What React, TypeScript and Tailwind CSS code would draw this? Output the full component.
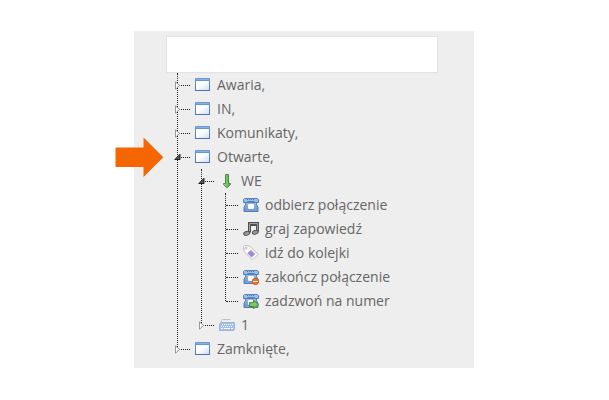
import React, { FC, ReactNode, useState } from "react";

const WindowIcon: FC = () => (
  <svg viewBox="0 0 16 16" className="block size-4" aria-hidden="true">
    <defs>
      <linearGradient id="win-frame" x1="0" y1="0" x2="0" y2="1">
        <stop offset="0" stopColor="#6f9cd8" />
        <stop offset="1" stopColor="#4f70ab" />
      </linearGradient>
      <linearGradient id="win-body" x1="0" y1="0" x2="1" y2="1">
        <stop offset="0.4" stopColor="#ffffff" />
        <stop offset="1" stopColor="#cfdff6" />
      </linearGradient>
    </defs>
    <rect x="0" y="1" width="15" height="13" rx="0.5" fill="url(#win-frame)" />
    <rect x="1" y="2" width="13" height="1" fill="#86afe4" />
    <rect x="1" y="4" width="13" height="9" fill="url(#win-body)" />
  </svg>
);

const DownIcon: FC = () => (
  <svg viewBox="0 0 16 16" className="block size-4" aria-hidden="true">
    <defs>
      <linearGradient id="down-fill" x1="0" y1="0" x2="1" y2="0">
        <stop offset="0" stopColor="#a5dc8d" />
        <stop offset="1" stopColor="#45a53f" />
      </linearGradient>
    </defs>
    <path d="M6.5 1.5h3v9h2v1L8.3 14.7h-.6L4.5 11.5v-1h2z" fill="url(#down-fill)" stroke="#43933d" />
  </svg>
);

const PhoneShape: FC = () => (
  <>
    <defs>
      <linearGradient id="phone-body" x1="0" y1="0" x2="0" y2="1">
        <stop offset="0" stopColor="#a3c3e8" />
        <stop offset="1" stopColor="#6690c8" />
      </linearGradient>
    </defs>
    <path d="M2.5 4.5h11v3l1.5 3v4H1v-4l1.5-3z" fill="url(#phone-body)" stroke="#4f7cb5" />
    <path d="M1.5 1.5h13l1 1v3h-3.6l-.6-1H4.7l-.6 1H.5v-3z" fill="#9dbfe6" stroke="#5581b8" />
    <path d="M4 2.5h8" stroke="#4d79ae" strokeDasharray="1 1" />
    <path d="M4 5.5h8" stroke="#5581b8" />
    <rect x="5" y="7" width="6" height="5" rx="1" fill="#fbfdff" />
    <path d="M2 13.5h12" stroke="#7ba3d6" />
  </>
);

const PhoneIcon: FC = () => (
  <svg viewBox="0 0 16 16" className="block size-4" aria-hidden="true">
    <PhoneShape />
  </svg>
);

const PhoneEndIcon: FC = () => (
  <svg viewBox="0 0 16 16" className="block size-4" aria-hidden="true">
    <PhoneShape />
    <circle cx="12.4" cy="12.4" r="3.1" fill="#f0742c" stroke="#d9520f" />
    <rect x="10" y="12" width="5" height="1" fill="#fff" />
  </svg>
);

const PhoneForwardIcon: FC = () => (
  <svg viewBox="0 0 16 16" className="block size-4" aria-hidden="true">
    <PhoneShape />
    <path d="M6.5 9.5h4V7.2l5 4.3-5 4.2v-2.2h-4z" fill="#87c65d" stroke="#3c8a2e" />
  </svg>
);

const MusicIcon: FC = () => (
  <svg viewBox="0 0 16 16" className="block size-4" aria-hidden="true">
    <path d="M5 1h11v9.5h-3V5H8v6.5H5z" fill="#505050" />
    <path d="M6.5 10.5v-8h8v7" fill="none" stroke="#a2a2a2" />
    <ellipse cx="3.7" cy="12.3" rx="3.1" ry="1.9" fill="#999" stroke="#505050" transform="rotate(-15 3.7 12.3)" />
    <ellipse cx="12.3" cy="11.3" rx="3" ry="1.9" fill="#999" stroke="#505050" transform="rotate(-15 12.3 11.3)" />
  </svg>
);

const TagIcon: FC = () => (
  <svg viewBox="0 0 16 16" className="block size-4" aria-hidden="true">
    <path d="M.5 1.5l1-1 5.2.6 8.4 8.2-5.6 5.6L1.2 6.7z" fill="#fbfbfb" stroke="#bcbcbc" />
    <circle cx="3" cy="3.2" r="1.1" fill="#eee" stroke="#b5b5b5" strokeWidth="0.7" />
    <path d="M7.8 4.9l4.4 4.2-3.5 3.4-4.3-4.2z" fill="#a08ad8" />
  </svg>
);

const KeyboardIcon: FC = () => (
  <svg viewBox="0 0 16 16" className="block size-4" aria-hidden="true">
    <path d="M2.5 6V3.5q0-1 1-1h8" fill="none" stroke="#c2c2c2" />
    <path d="M1.5 5.5h14v6l-.6 2H.5v-6z" fill="#a4c0e6" stroke="#9ab7de" />
    <path d="M3 7.5h11M2 9.5h12" stroke="#fff" strokeDasharray="1 1" />
    <path d="M2 11.5h2m1 0h6m1 0h2" stroke="#fff" />
  </svg>
);

const Pointer: FC = () => (
  <svg viewBox="0 0 49 40" className="absolute -left-[19px] top-[106px] h-10 w-[49px]" aria-hidden="true">
    <path d="M.5 10.5H28.5V.6L48.3 20.3 28.5 40V30H.5z" fill="#f56600" />
  </svg>
);

interface TreeNode {
  label: string;
  icon: ReactNode;
  expandable?: boolean;
  children?: TreeNode[];
}

const nodes: TreeNode[] = [
  { label: "Awaria,", icon: <WindowIcon />, expandable: true },
  { label: "IN,", icon: <WindowIcon />, expandable: true },
  { label: "Komunikaty,", icon: <WindowIcon />, expandable: true },
  {
    label: "Otwarte,",
    icon: <WindowIcon />,
    expandable: true,
    children: [
      {
        label: "WE",
        icon: <DownIcon />,
        expandable: true,
        children: [
          { label: "odbierz połączenie", icon: <PhoneIcon /> },
          { label: "graj zapowiedź", icon: <MusicIcon /> },
          { label: "idź do kolejki", icon: <TagIcon /> },
          { label: "zakończ połączenie", icon: <PhoneEndIcon /> },
          { label: "zadzwoń na numer", icon: <PhoneForwardIcon /> },
        ],
      },
      { label: "1", icon: <KeyboardIcon />, expandable: true },
    ],
  },
  { label: "Zamknięte,", icon: <WindowIcon />, expandable: true },
];

const TreeItem: FC<{ node: TreeNode }> = ({ node }) => {
  const [open, setOpen] = useState<boolean>(Boolean(node.children));

  return (
    <li>
      <div className="relative flex h-6 items-center">
        <span className="w-3 border-t border-dotted border-[#222]" />
        {node.expandable && (
          <button
            type="button"
            aria-expanded={open}
            aria-label={node.label}
            onClick={() => setOpen(!open)}
            className="absolute -left-1 top-2 h-[9px] w-2 cursor-pointer"
          >
            <svg viewBox="0 0 8 9" className="block h-[9px] w-2" aria-hidden="true">
              {open ? (
                <path d="M6 1.2V6.5H.8z" fill="#555" stroke="#222" />
              ) : (
                <path d="M1.5.8V8.2L5.7 4.5z" fill="#f6f6f6" stroke="#999" />
              )}
            </svg>
          </button>
        )}
        <span className="ml-[5px]">{node.icon}</span>
        <span className="ml-1.5 whitespace-nowrap">{node.label}</span>
      </div>
      {open && node.children && (
        <div className="ml-[23px]">
          <Branch nodes={node.children} />
        </div>
      )}
    </li>
  );
};

// The guide line stops half a row early, at the middle of the last item
const Branch: FC<{ nodes: TreeNode[] }> = ({ nodes }) => (
  <div className="flex">
    <span className="mb-3 border-l border-dotted border-[#222]" />
    <ul>
      {nodes.map((node) => (
        <TreeItem key={node.label} node={node} />
      ))}
    </ul>
  </div>
);

const App: FC = () => {
  const [query, setQuery] = useState<string>("");

  return (
    <main className="flex min-h-screen justify-center bg-white py-[31px] pl-4 pr-[17px] font-['Open_Sans',sans-serif] text-sm text-[#666]">
      <div className="relative w-full max-w-[340px] self-start bg-[#eee] pb-[7px] pl-8 pr-9 pt-[5px]">
        <input
          type="text"
          aria-label="Szukaj"
          value={query}
          onChange={(e) => setQuery(e.target.value)}
          className="block h-[37px] w-full border border-[#e2e2e2] bg-white px-3 outline-none"
        />
        <div className="pl-[11px]">
          <Branch nodes={nodes} />
        </div>
        <Pointer />
      </div>
    </main>
  );
};

export default App;
